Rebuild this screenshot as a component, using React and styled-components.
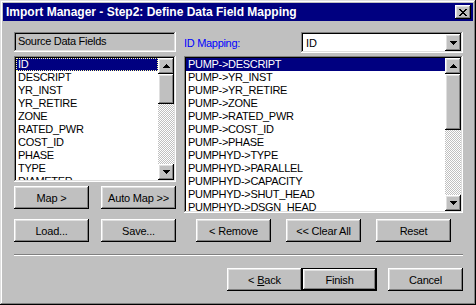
import React from "react";
import styled, { createGlobalStyle, css } from "styled-components";

const Global = createGlobalStyle`
  html, body { margin: 0; padding: 0; background: #c0c0c0; }
  body { font-family: "Liberation Sans", Arial, sans-serif; font-size: 11px; color: #000; }
  * { box-sizing: border-box; }
`;

const raised = css`
  background: #c0c0c0;
  box-shadow: inset -1px -1px #000, inset 1px 1px #fff, inset -2px -2px #808080, inset 2px 2px #dfdfdf;
`;

const sunken = css`
  box-shadow: inset -1px -1px #fff, inset 1px 1px #808080, inset -2px -2px #dfdfdf, inset 2px 2px #000;
`;

const Window = styled.div`
  width: 476px;
  height: 305px;
  background: #c0c0c0;
  padding: 3px;
  display: flex;
  flex-direction: column;
  box-shadow: inset -1px -1px #000, inset 1px 1px #dfdfdf, inset -2px -2px #808080, inset 2px 2px #fff;
`;

const TitleBar = styled.div`
  height: 18px;
  flex: none;
  background: #000080;
  display: flex;
  align-items: center;
  justify-content: space-between;
  padding: 0 2px 0 3px;
`;

const Title = styled.span`
  color: #fff;
  font-weight: bold;
  font-size: 12px;
  white-space: nowrap;
`;

const CloseButton = styled.div`
  ${raised};
  width: 16px;
  height: 14px;
  display: flex;
  align-items: center;
  justify-content: center;
`;

const Body = styled.div`
  flex: 1;
  padding: 11px 10px 10px 11px;
  display: flex;
  flex-direction: column;
`;

const Main = styled.div`
  display: grid;
  grid-template-columns: 162px 279px;
  grid-template-rows: 21px 160px 23px;
  column-gap: 8px;
  row-gap: 3px;
  align-items: start;
`;

const Column = styled.div`
  display: flex;
  flex-direction: column;
  gap: 4px;
`;

const LabelBox = styled.div`
  ${sunken};
  height: 20px;
  padding: 3px 3px 0 4px;
  letter-spacing: -0.3px;
  white-space: nowrap;
`;

const HeaderRow = styled.div`
  display: flex;
  align-items: center;
  justify-content: space-between;
`;

const BlueLabel = styled.span`
  color: #0000ff;
  letter-spacing: -0.3px;
`;

const Combo = styled.div`
  ${sunken};
  background: #fff;
  width: 162px;
  height: 21px;
  padding: 2px;
  display: flex;
  align-items: center;
  justify-content: space-between;
`;

const ComboText = styled.span`
  padding-left: 3px;
`;

const ArrowButton = styled.div`
  ${raised};
  width: 16px;
  height: ${(p) => p.$h || 16}px;
  flex: none;
  display: flex;
  align-items: center;
  justify-content: center;
`;

const ListBox = styled.div`
  ${sunken};
  background: #fff;
  height: ${(p) => p.$h}px;
  padding: 2px;
  display: flex;
  overflow: hidden;
`;

const Items = styled.div`
  flex: 1;
  overflow: hidden;
  min-width: 0;
`;

const Item = styled.div`
  height: 13px;
  line-height: 13px;
  padding-left: 2px;
  letter-spacing: -0.3px;
  white-space: nowrap;
  ${(p) =>
    p.$selected &&
    css`
      background: #000080;
      color: #fff;
    `}
  ${(p) =>
    p.$focus &&
    css`
      outline: 1px dotted #ffffa0;
      outline-offset: -1px;
    `}
`;

const ScrollBar = styled.div`
  width: 16px;
  flex: none;
  display: flex;
  flex-direction: column;
`;

const Track = styled.div`
  flex: 1;
  background-color: #fff;
  background-image: conic-gradient(#c0c0c0 25%, #fff 0 50%, #c0c0c0 0 75%, #fff 0);
  background-size: 2px 2px;
`;

const Thumb = styled.div`
  ${raised};
  height: ${(p) => p.$h}px;
  flex: none;
`;

const ButtonRow = styled.div`
  display: flex;
  justify-content: ${(p) => p.$justify || "space-between"};
  gap: ${(p) => p.$gap || 0}px;
  margin-top: ${(p) => p.$mt || 0}px;
`;

const Button = styled.div`
  ${raised};
  width: 75px;
  height: 23px;
  display: flex;
  align-items: center;
  justify-content: center;
  font-size: 11px;
  letter-spacing: -0.2px;
  white-space: nowrap;
  margin-left: ${(p) => p.$ml || 0}px;
  ${(p) =>
    p.$default &&
    css`
      box-shadow: inset 0 0 0 1px #000, inset -2px -2px #000, inset 2px 2px #fff, inset -3px -3px #808080,
        inset 3px 3px #dfdfdf;
    `}
`;

const Separator = styled.div`
  margin-top: 12px;
  height: 2px;
  flex: none;
  border-top: 1px solid #808080;
  border-bottom: 1px solid #fff;
`;

const Underline = styled.span`
  text-decoration: underline;
`;

const Up = () => (
  <svg width="7" height="4" viewBox="0 0 7 4">
    <path d="M3 0h1v1h1v1h1v1h1v1H0V3h1V2h1V1h1z" fill="#000" />
  </svg>
);
const Down = () => (
  <svg width="7" height="4" viewBox="0 0 7 4">
    <path d="M0 0h7v1H6v1H5v1H4v1H3V3H2V2H1V1H0z" fill="#000" />
  </svg>
);
const CloseX = () => (
  <svg width="8" height="7" viewBox="0 0 8 7">
    <path
      d="M0 0h2v1h1v1h2V1h1V0h2v1H7v1H6v1H5v1h1v1h1v1h1v1H6V6H5V5H3v1H2v1H0V6h1V5h1V4h1V3H2V2H1V1H0z"
      fill="#000"
    />
  </svg>
);

const leftItems = ["ID", "DESCRIPT", "YR_INST", "YR_RETIRE", "ZONE", "RATED_PWR", "COST_ID", "PHASE", "TYPE", "DIAMETER"];
const rightItems = [
  "PUMP->DESCRIPT",
  "PUMP->YR_INST",
  "PUMP->YR_RETIRE",
  "PUMP->ZONE",
  "PUMP->RATED_PWR",
  "PUMP->COST_ID",
  "PUMP->PHASE",
  "PUMPHYD->TYPE",
  "PUMPHYD->PARALLEL",
  "PUMPHYD->CAPACITY",
  "PUMPHYD->SHUT_HEAD",
  "PUMPHYD->DSGN_HEAD",
];

const Scroll = ({ thumb }) => (
  <ScrollBar>
    <ArrowButton>
      <Up />
    </ArrowButton>
    <Thumb $h={thumb} />
    <Track />
    <ArrowButton>
      <Down />
    </ArrowButton>
  </ScrollBar>
);

export default function App() {
  return (
    <>
      <Global />
      <Window>
        <TitleBar>
          <Title>Import Manager - Step2: Define Data Field Mapping</Title>
          <CloseButton>
            <CloseX />
          </CloseButton>
        </TitleBar>
        <Body>
          <Main>
            <LabelBox>Source Data Fields</LabelBox>
            <HeaderRow>
              <BlueLabel>ID Mapping:</BlueLabel>
              <Combo>
                <ComboText>ID</ComboText>
                <ArrowButton $h={17}>
                  <Down />
                </ArrowButton>
              </Combo>
            </HeaderRow>
            <Column>
              <ListBox $h={126}>
                <Items>
                  {leftItems.map((t, i) => (
                    <Item key={t} $selected={i === 0} $focus={i === 0}>
                      {t}
                    </Item>
                  ))}
                </Items>
                <Scroll thumb={30} />
              </ListBox>
              <ButtonRow>
                <Button>Map &gt;</Button>
                <Button>Auto Map &gt;&gt;</Button>
              </ButtonRow>
            </Column>
            <ListBox $h={157}>
              <Items>
                {rightItems.map((t, i) => (
                  <Item key={t} $selected={i === 0}>
                    {t}
                  </Item>
                ))}
              </Items>
              <Scroll thumb={56} />
            </ListBox>
            <ButtonRow>
              <Button>Load...</Button>
              <Button>Save...</Button>
            </ButtonRow>
            <ButtonRow $justify="center" $gap={15}>
              <Button>&lt; Remove</Button>
              <Button>&lt;&lt; Clear All</Button>
              <Button>Reset</Button>
            </ButtonRow>
          </Main>
          <Separator />
          <ButtonRow $mt={12} $justify="flex-end">
            <Button>
              &lt;&nbsp;<Underline>B</Underline>ack
            </Button>
            <Button $default>Finish</Button>
            <Button $ml={11}>Cancel</Button>
          </ButtonRow>
        </Body>
      </Window>
    </>
  );
}
